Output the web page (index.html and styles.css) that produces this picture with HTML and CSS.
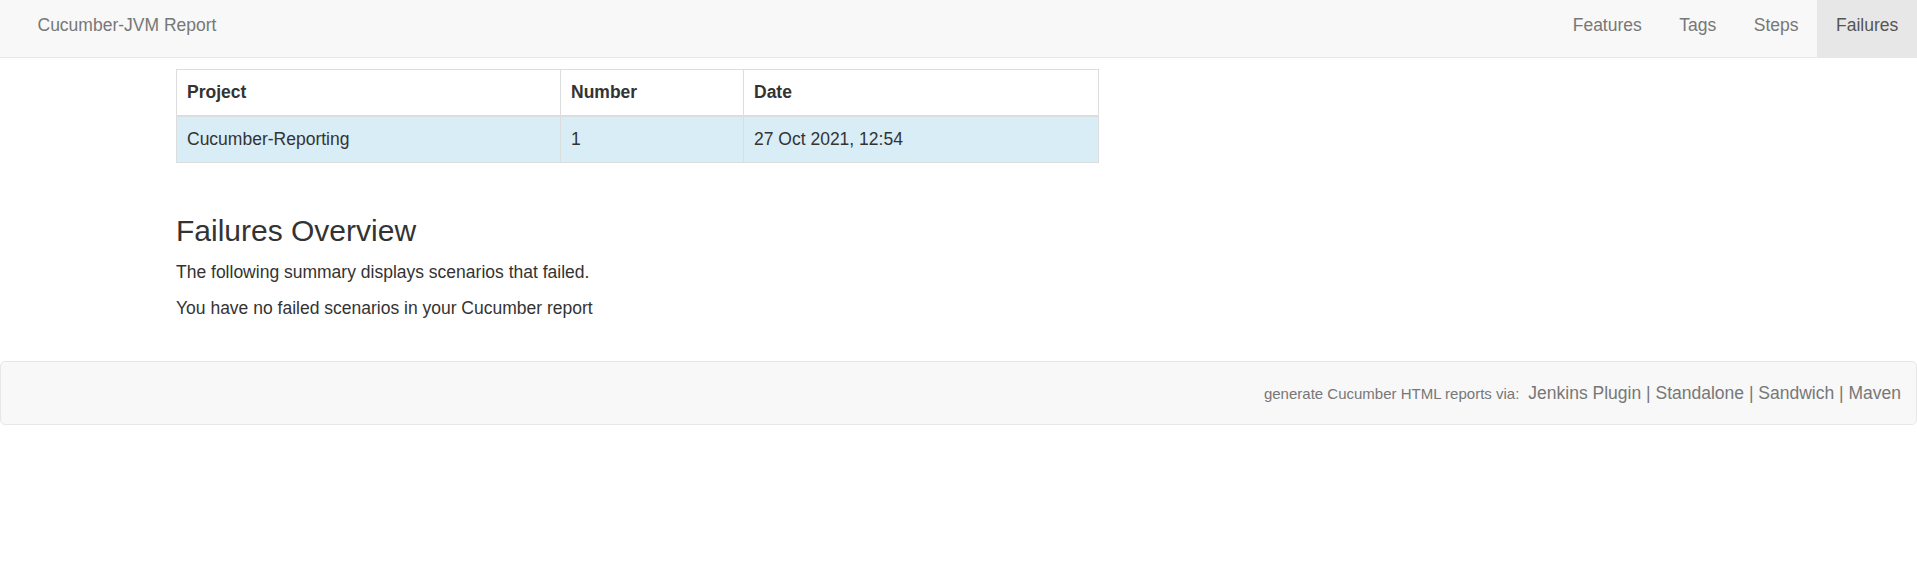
FILE: index.html
```html
<!DOCTYPE html>
<html lang="en">
<head>
<meta charset="utf-8">
<title>Cucumber-JVM Report</title>
<link rel="stylesheet" href="styles.css">
</head>
<body>
<header class="navbar">
  <a class="brand" href="#">Cucumber-JVM Report</a>
  <ul class="nav">
    <li><a href="#">Features</a></li>
    <li><a href="#">Tags</a></li>
    <li><a href="#">Steps</a></li>
    <li class="active"><a href="#">Failures</a></li>
  </ul>
</header>

<main class="content">
  <table class="report-table">
    <thead>
      <tr>
        <th class="col-project">Project</th>
        <th class="col-number">Number</th>
        <th>Date</th>
      </tr>
    </thead>
    <tbody>
      <tr class="info">
        <td>Cucumber-Reporting</td>
        <td>1</td>
        <td>27 Oct 2021, 12:54</td>
      </tr>
    </tbody>
  </table>

  <h3 class="title">Failures Overview</h3>
  <p>The following summary displays scenarios that failed.</p>
  <p>You have no failed scenarios in your Cucumber report</p>
</main>

<footer class="footer">
  <span class="footer-note">generate Cucumber HTML reports via:</span>
  <span class="footer-links">
    <a href="#">Jenkins Plugin</a> |
    <a href="#">Standalone</a> |
    <a href="#">Sandwich</a> |
    <a href="#">Maven</a>
  </span>
</footer>
</body>
</html>
```

FILE: styles.css
```css
* {
  box-sizing: border-box;
}

html, body {
  margin: 0;
  padding: 0;
  background: #fff;
}

body {
  font-family: "Liberation Sans", Arial, Helvetica, sans-serif;
  font-size: 17.5px;
  line-height: 25px;
  color: #333;
}

a {
  text-decoration: none;
}

/* Navbar */
.navbar {
  display: flex;
  justify-content: space-between;
  align-items: stretch;
  height: 58px;
  padding-left: 18.75px;
  background: #f8f8f8;
  border-bottom: 1px solid #e7e7e7;
}

.brand {
  display: block;
  padding: 12.5px 18.75px 0;
  color: #777;
  font-size: 17.5px;
  line-height: 25px;
}

.nav {
  display: flex;
  margin: 0;
  padding: 0;
  list-style: none;
}

.nav li {
  display: flex;
}

.nav a {
  display: block;
  padding: 12.5px 18.75px 0;
  color: #777;
  line-height: 25px;
}

.nav li.active a {
  background: #e7e7e7;
  color: #555;
}

/* Content */
.content {
  margin: 11px 0 0 176px;
  width: 923px;
}

.report-table {
  width: 923px;
  border-collapse: collapse;
  margin-bottom: 0;
}

.report-table th,
.report-table td {
  padding: 10px;
  line-height: 25px;
  text-align: left;
  border: 1px solid #ddd;
  vertical-align: top;
}

.report-table th {
  font-weight: bold;
  border-bottom: 2px solid #ddd;
}

.col-project {
  width: 384px;
}

.col-number {
  width: 183px;
}

.report-table tr.info td {
  background: #d9edf7;
}

.title {
  margin: 51px 0 12.5px;
  font-size: 30px;
  line-height: 33px;
  font-weight: 500;
  color: #333;
}

.content p {
  margin: 0 0 11px;
}

/* Footer */
.footer {
  display: flex;
  justify-content: flex-end;
  align-items: center;
  height: 64px;
  margin-top: 40.5px;
  padding-right: 15px;
  background: #f8f8f8;
  border: 1px solid #e7e7e7;
  border-radius: 5px;
  color: #777;
}

.footer-note {
  font-size: 15px;
  line-height: 25px;
}

.footer-links {
  margin-left: 9px;
  font-size: 17.5px;
  line-height: 25px;
}

.footer-links a {
  color: #777;
}
```
